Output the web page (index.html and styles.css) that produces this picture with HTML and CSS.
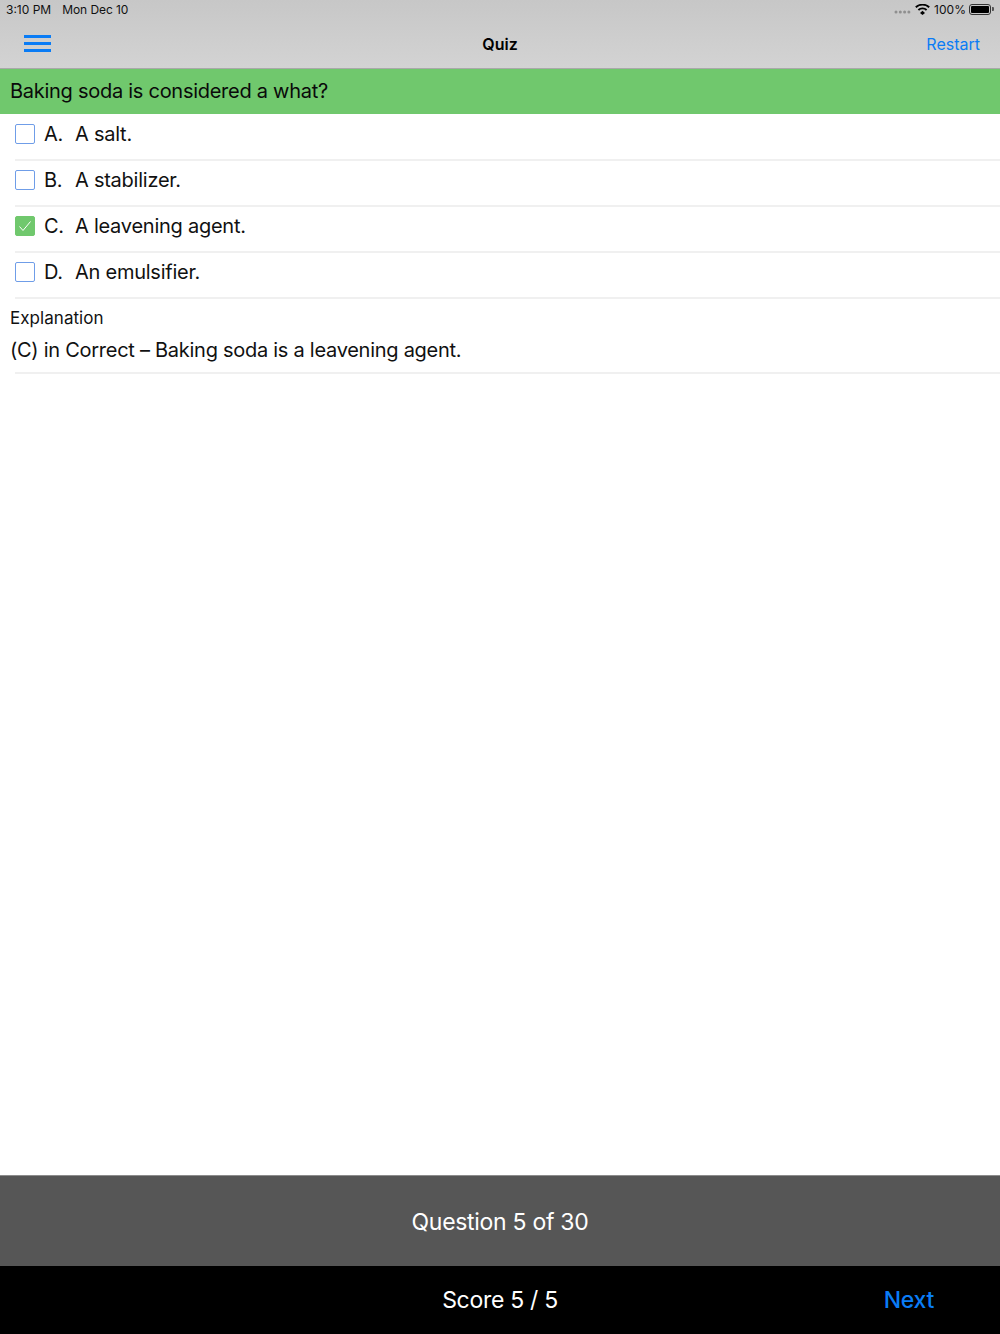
FILE: index.html
```html
<!DOCTYPE html>
<html lang="en">
<head>
<meta charset="utf-8">
<title>Quiz</title>
<link rel="stylesheet" href="styles.css">
</head>
<body>
<div class="app">
  <header class="top">
    <div class="status">
      <span class="time">3:10 PM</span>
      <span class="date">Mon Dec 10</span>
      <span class="spacer"></span>
      <svg class="signal" width="17" height="4" viewBox="0 0 17 4"><g fill="#8f8f8f"><circle cx="2" cy="2" r="1.5"/><circle cx="6.3" cy="2" r="1.5"/><circle cx="10.6" cy="2" r="1.5"/><circle cx="14.9" cy="2" r="1.5"/></g></svg>
      <svg class="wifi" width="15" height="11" viewBox="0 0 15 11"><path d="M7.5 6.8 10 9 7.5 11 5 9Z" fill="#000"/><g fill="none" stroke="#000" stroke-width="1.9"><path d="M3.4 6a6 6 0 0 1 8.2 0"/><path d="M.8 3.3a9.8 9.8 0 0 1 13.4 0"/></g></svg>
      <span class="pct">100%</span>
      <span class="battery"><span class="battery-fill"></span></span>
      <span class="battery-tip"></span>
    </div>
    <nav class="nav">
      <svg class="menu" width="27" height="18" viewBox="0 0 27 18"><g fill="#0a7cf5"><rect y="0" width="27" height="3"/><rect y="7" width="27" height="3"/><rect y="14" width="27" height="3"/></g></svg>
      <h1 class="title">Quiz</h1>
      <a class="restart">Restart</a>
    </nav>
  </header>
  <main class="content">
    <div class="question">Baking soda is considered a what?</div>
    <ul class="options">
      <li class="option"><span class="box"></span><span class="letter">A.</span><span class="answer">A salt.</span></li>
      <li class="option"><span class="box"></span><span class="letter">B.</span><span class="answer">A stabilizer.</span></li>
      <li class="option"><span class="box checked"><svg width="14" height="12" viewBox="0 0 14 12"><path d="M1.5 6.5 5 10.5 12.5 1.5" fill="none" stroke="#fff" stroke-width="1"/></svg></span><span class="letter">C.</span><span class="answer">A leavening agent.</span></li>
      <li class="option"><span class="box"></span><span class="letter">D.</span><span class="answer">An emulsifier.</span></li>
    </ul>
    <section class="explain">
      <h2 class="explain-title">Explanation</h2>
      <p class="explain-text">(C) in Correct – Baking soda is a leavening agent.</p>
    </section>
  </main>
  <div class="progress">Question 5 of 30</div>
  <footer class="score-bar">
    <span class="score">Score 5 / 5</span>
    <a class="next">Next</a>
  </footer>
</div>
</body>
</html>
```
FILE: styles.css
```css
* { box-sizing: border-box; }
html, body { margin: 0; padding: 0; }
body { font-family: Inter, "Liberation Sans", sans-serif; color: #000; background: #fff; }
.app { width: 1000px; height: 1334px; display: flex; flex-direction: column; overflow: hidden; }

.top { height: 69px; flex: none; background: linear-gradient(#c7c7c7, #d3d3d3); border-bottom: 1px solid #a9a9a9; }
.status { height: 20px; display: flex; align-items: center; padding: 0 6px 2px; font-size: 12px; letter-spacing: 0; color: #111; }
.date { margin-left: 11px; letter-spacing: -0.08px; }
.spacer { flex: 1; }
.signal { margin-right: 4px; margin-top: 5px; }
.wifi { margin-right: 4px; }
.pct { letter-spacing: 0.05px; }
.battery { width: 22px; height: 11px; border: 1px solid #333; border-radius: 3px; padding: 1px; display: flex; margin-left: 3px; }
.battery-fill { flex: 1; background: #000; border-radius: 1px; }
.battery-tip { width: 2px; height: 4px; background: #555; border-radius: 0 1px 1px 0; margin-left: 1px; }

.nav { height: 48px; position: relative; display: flex; align-items: center; justify-content: space-between; padding: 0 20px 0 24px; }
.menu { margin-bottom: 1px; }
.title { position: absolute; left: 0; right: 0; margin: 0; text-align: center; font-size: 16px; font-weight: 600; pointer-events: none; }
.restart { font-size: 16px; color: #0a7cf5; }

.content { flex: 1; min-height: 0; }
.question { height: 45px; background: #70c86d; padding: 0 10px 2px; display: flex; align-items: center; font-size: 20px; letter-spacing: -0.27px; color: #0a0a0a; }
.options { list-style: none; margin: 0; padding: 1px 0 0; }
.option { height: 46px; margin-left: 15px; display: flex; align-items: flex-start; padding-top: 9px; border-bottom: 2px solid #f0f0f0; font-size: 20px; letter-spacing: -0.25px; line-height: 21px; color: #111; }
.box { width: 20px; height: 20px; flex: none; border: 1px solid #6f9de8; border-radius: 2px; background: #fff; display: flex; align-items: center; justify-content: center; }
.box.checked { background: #70c86d; border-color: #70c86d; }
.letter { width: 31px; margin-left: 9px; flex: none; }

.explain { margin-top: 8px; }
.explain-title { margin: 0 0 0 10px; font-size: 17px; font-weight: 400; line-height: 22px; letter-spacing: 0.05px; color: #111; }
.explain-text { margin: 0 0 0 15px; padding: 9px 0 10px; text-indent: -5px; font-size: 20px; line-height: 24px; letter-spacing: -0.27px; border-bottom: 2px solid #f0f0f0; color: #111; }

.progress { height: 91px; flex: none; background: #565656; border-top: 1px solid #8c8c8c; display: flex; align-items: center; justify-content: center; padding-top: 1px; color: #fff; font-size: 23px; letter-spacing: -0.3px; }
.score-bar { height: 68px; flex: none; background: #000; position: relative; display: flex; align-items: center; justify-content: flex-end; padding-right: 66px; }
.score { position: absolute; left: 0; right: 0; text-align: center; line-height: 29px; color: #fff; font-size: 23px; letter-spacing: -0.3px; }
.next { color: #0a7cf5; font-size: 23px; line-height: 29px; font-weight: 500; letter-spacing: -0.3px; }
```
